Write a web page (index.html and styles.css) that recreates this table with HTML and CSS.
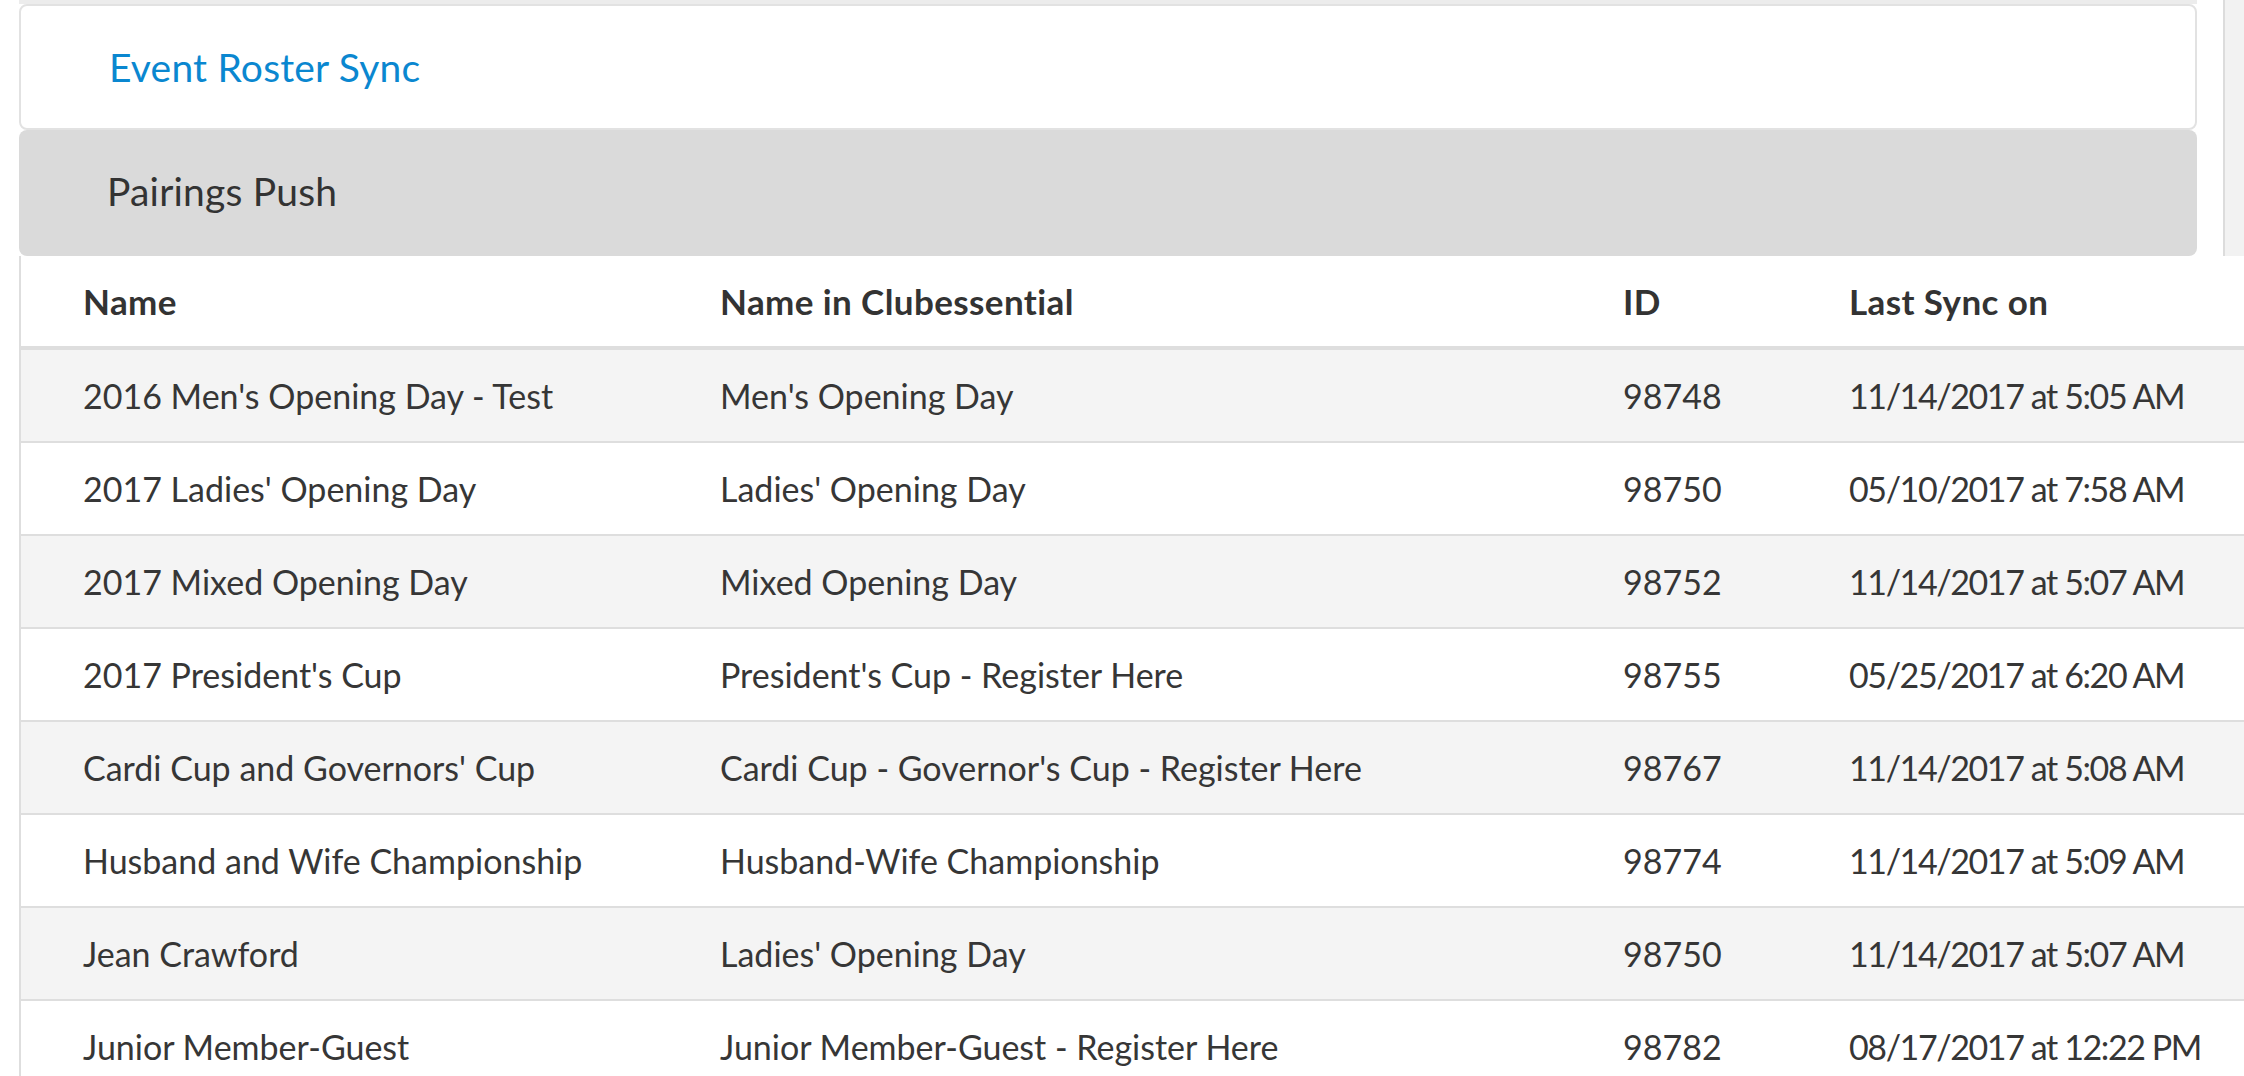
FILE: index.html
```html
<!DOCTYPE html>
<html lang="en">
<head>
    <meta charset="UTF-8">
    <meta name="viewport" content="width=device-width, initial-scale=1.0">
    <title>Event Roster Sync</title>
    <link rel="stylesheet" href="styles.css">
</head>
<body>
    <div class="page">
        <div class="top">
            <div class="accordion">
                <div class="accordion-strip"></div>
                <div class="panel panel-link">Event Roster Sync</div>
                <div class="panel panel-active">Pairings Push</div>
            </div>
            <div class="side"></div>
        </div>

        <table class="roster">
            <colgroup>
                <col class="col-name">
                <col class="col-club">
                <col class="col-id">
                <col class="col-sync">
            </colgroup>
            <thead>
                <tr>
                    <th>Name</th>
                    <th>Name in Clubessential</th>
                    <th>ID</th>
                    <th>Last Sync on</th>
                </tr>
            </thead>
            <tbody>
                <tr>
                    <td>2016 Men's Opening Day - Test</td>
                    <td>Men's Opening Day</td>
                    <td>98748</td>
                    <td class="sync">11/14/2017 at 5:05 AM</td>
                </tr>
                <tr>
                    <td>2017 Ladies' Opening Day</td>
                    <td>Ladies' Opening Day</td>
                    <td>98750</td>
                    <td class="sync">05/10/2017 at 7:58 AM</td>
                </tr>
                <tr>
                    <td>2017 Mixed Opening Day</td>
                    <td>Mixed Opening Day</td>
                    <td>98752</td>
                    <td class="sync">11/14/2017 at 5:07 AM</td>
                </tr>
                <tr>
                    <td>2017 President's Cup</td>
                    <td>President's Cup - Register Here</td>
                    <td>98755</td>
                    <td class="sync">05/25/2017 at 6:20 AM</td>
                </tr>
                <tr>
                    <td>Cardi Cup and Governors' Cup</td>
                    <td>Cardi Cup - Governor's Cup - Register Here</td>
                    <td>98767</td>
                    <td class="sync">11/14/2017 at 5:08 AM</td>
                </tr>
                <tr>
                    <td>Husband and Wife Championship</td>
                    <td>Husband-Wife Championship</td>
                    <td>98774</td>
                    <td class="sync">11/14/2017 at 5:09 AM</td>
                </tr>
                <tr>
                    <td>Jean Crawford</td>
                    <td>Ladies' Opening Day</td>
                    <td>98750</td>
                    <td class="sync">11/14/2017 at 5:07 AM</td>
                </tr>
                <tr>
                    <td>Junior Member-Guest</td>
                    <td>Junior Member-Guest - Register Here</td>
                    <td>98782</td>
                    <td class="sync">08/17/2017 at 12:22 PM</td>
                </tr>
            </tbody>
        </table>
    </div>
</body>
</html>
```

FILE: styles.css
```css
html, body {
    margin: 0;
    padding: 0;
    overflow: hidden;
    background-color: #fff;
}
body {
    font-family: Lato, "Open Sans", sans-serif;
    color: #363636;
}
.page {
    padding-left: 19px;
}
.top {
    display: flex;
    height: 256px;
}
.accordion {
    width: 2178px;
    flex-shrink: 0;
}
.accordion-strip {
    height: 4px;
    background-color: #ececec;
}
.panel {
    display: flex;
    align-items: center;
    box-sizing: border-box;
    padding-left: 88px;
    font-size: 39px;
    letter-spacing: 0.2px;
    border-radius: 8px;
}
.panel-link {
    height: 126px;
    border: 2px solid #e2e2e2;
    color: #0a87d0;
}
.panel-active {
    height: 126px;
    padding-bottom: 4px;
    background-color: #dadada;
    color: #333;
}
.side {
    flex: 1;
    margin-left: 26px;
    border-left: 2px solid #dcdcdc;
    background-color: #f2f2f2;
}
.roster {
    width: 2300px;
    table-layout: fixed;
    border-collapse: collapse;
    border-left: 2px solid #dedede;
    font-size: 34px;
}
.col-name {
    width: 638px;
}
.col-club {
    width: 903px;
}
.col-id {
    width: 226px;
}
.col-sync {
    width: 533px;
}
.roster th,
.roster td {
    text-align: left;
    padding: 0 0 0 62px;
    white-space: nowrap;
}
.roster th {
    height: 90px;
    font-size: 35px;
    letter-spacing: 0.4px;
    font-weight: 700;
    color: #333;
    border-bottom: 4px solid #dedede;
}
.roster td {
    height: 91px;
    border-bottom: 2px solid #dedede;
}
.roster td.sync {
    letter-spacing: -1.4px;
}
.roster tbody tr:nth-child(odd) {
    background-color: #f4f4f4;
}
```
